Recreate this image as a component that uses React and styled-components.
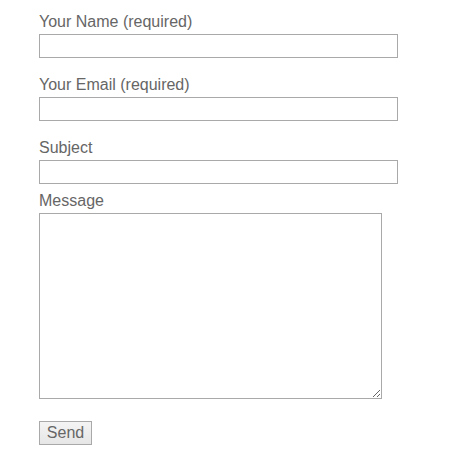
import React from "react";
import styled, { createGlobalStyle } from "styled-components";

const Global = createGlobalStyle`
  html, body { margin: 0; padding: 0; background: #fff; }
  body { font-family: "Liberation Sans", Arial, sans-serif; }
`;

const Form = styled.form`
  display: flex;
  flex-direction: column;
  align-items: flex-start;
  padding: 12px 0 0 39px;
`;

const Field = styled.div`
  display: flex;
  flex-direction: column;
  align-items: flex-start;
  margin-bottom: ${(p) => p.$gap}px;
`;

const Label = styled.label`
  font-size: 16px;
  line-height: 20px;
  color: #666;
  margin-bottom: 2px;
`;

const Input = styled.input`
  box-sizing: border-box;
  width: 359px;
  height: 24px;
  margin: 0;
  border: 1px solid #a9a9a9;
  background: #fff;
  font: 14px "Liberation Sans", Arial, sans-serif;
  padding: 2px 4px;
  outline: none;
`;

const TextArea = styled.textarea`
  box-sizing: border-box;
  width: 343px;
  height: 186px;
  margin: 0;
  border: 1px solid #a9a9a9;
  background: #fff;
  font: 14px "Liberation Sans", Arial, sans-serif;
  padding: 2px;
  outline: none;
  resize: both;
`;

const Button = styled.button`
  box-sizing: border-box;
  width: 53px;
  height: 24px;
  margin: 0;
  padding: 0;
  border: 1px solid #a9a9a9;
  border-radius: 0;
  background: linear-gradient(#f4f4f4, #e6e6e6);
  color: #666;
  font: 16px/20px "Liberation Sans", Arial, sans-serif;
`;

export default function App() {
  return (
    <>
      <Global />
      <Form onSubmit={(e) => e.preventDefault()}>
        <Field $gap={17}>
          <Label>Your Name (required)</Label>
          <Input type="text" />
        </Field>
        <Field $gap={17}>
          <Label>Your Email (required)</Label>
          <Input type="email" />
        </Field>
        <Field $gap={7}>
          <Label>Subject</Label>
          <Input type="text" />
        </Field>
        <Field $gap={22}>
          <Label>Message</Label>
          <TextArea />
        </Field>
        <Button type="submit">Send</Button>
      </Form>
    </>
  );
}
